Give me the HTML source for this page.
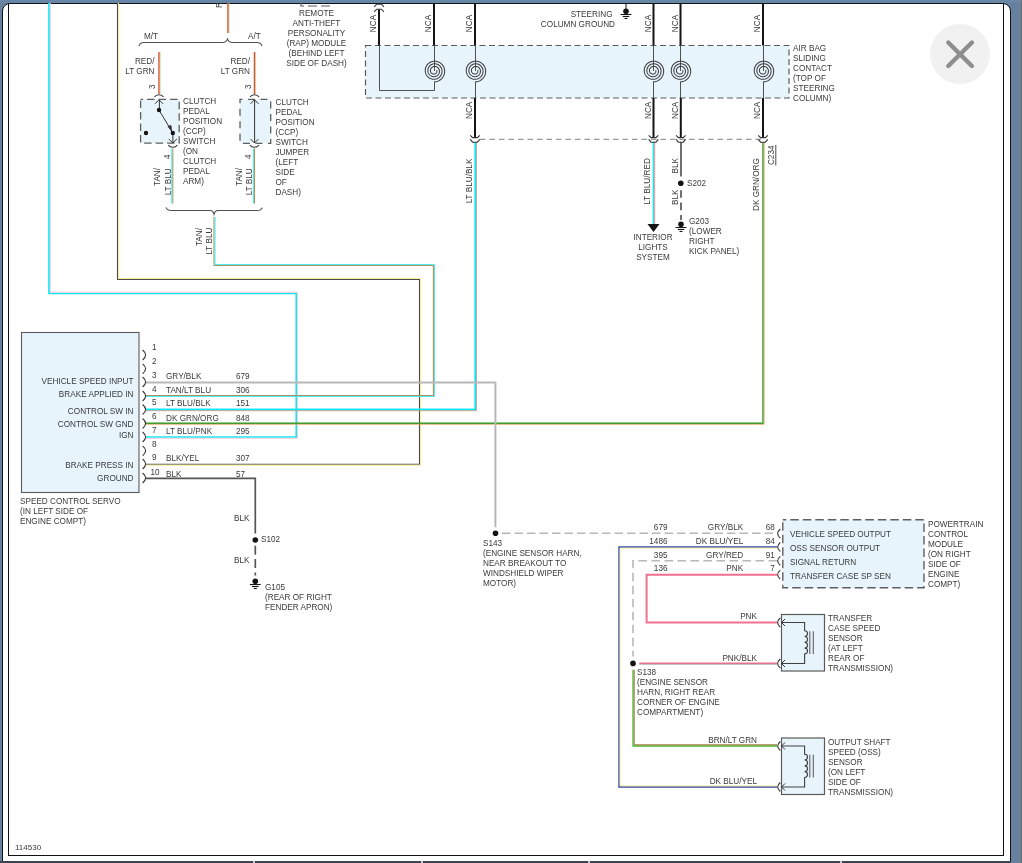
<!DOCTYPE html>
<html><head><meta charset="utf-8"><style>
html,body{margin:0;padding:0;width:1022px;height:863px;overflow:hidden;background:#66809e;font-family:"Liberation Sans",sans-serif}
#panel{position:absolute;left:2px;top:3px;width:1007px;height:870px;background:#fff;border:1px solid #0e141c;border-radius:8px}
#img{position:absolute;left:0;top:0;width:1022px;height:863px;will-change:transform}
#frame{position:absolute;left:8px;top:3px;width:994px;height:852px;border:1px solid #111;border-top:0}
#bar{position:absolute;left:0;top:861px;width:1011px;height:2px;background:#3a4452}
.gap{position:absolute;top:861px;width:2px;height:2px;background:#c8ccd2}
#close{position:absolute;left:930px;top:24px;width:60px;height:60px;border-radius:50%;background:#f1f1f1}
#rs{position:absolute;left:1021px;top:0;width:1px;height:863px;background:#6c7070}
#topbar{position:absolute;left:0;top:0;width:1022px;height:3px;background:#6a86a6}
</style></head><body>
<div id="panel"></div>
<div id="img"><svg width="1022" height="863" viewBox="0 0 1022 863" font-family="Liberation Sans, sans-serif">
<rect x="365.5" y="45.5" width="423.5" height="52.5" fill="#e8f4fc" stroke="#5a5a5a" stroke-width="1.2" stroke-dasharray="6,3.5"/>
<path d="M301.00,0.00 L301.00,6.00 L332.00,6.00" fill="none" stroke="#5a5a5a" stroke-width="1.2" stroke-dasharray="9,4" stroke-linecap="butt"/>
<path d="M146.00,437.00 L296.30,437.00 L296.30,293.50 L49.00,293.50 L49.00,0.00" fill="none" stroke="#10e8f8" stroke-width="1.7" stroke-linecap="butt"/>
<path d="M146.00,438.35 L297.65,438.35 L297.65,292.15 L50.35,292.15 L50.35,0.00" fill="none" stroke="#ffc8d8" stroke-width="1" stroke-linecap="butt"/>
<path d="M146.00,464.20 L419.50,464.20 L419.50,279.50 L117.50,279.50 L117.50,0.00" fill="none" stroke="#504850" stroke-width="1.1" stroke-linecap="butt"/>
<path d="M146.00,465.25 L420.55,465.25 L420.55,278.45 L118.55,278.45 L118.55,0.00" fill="none" stroke="#f4f090" stroke-width="1" stroke-linecap="butt"/>
<path d="M146.00,395.50 L433.40,395.50 L433.40,265.50 L214.00,265.50 L214.00,217.00" fill="none" stroke="#a89060" stroke-width="1.1" stroke-linecap="butt"/>
<path d="M146.00,396.55 L434.45,396.55 L434.45,264.45 L215.05,264.45 L215.05,217.00" fill="none" stroke="#48eef0" stroke-width="1" stroke-linecap="butt"/>
<path d="M146.00,409.40 L475.20,409.40 L475.20,142.00" fill="none" stroke="#10e8f8" stroke-width="1.7" stroke-linecap="butt"/>
<path d="M146.00,410.65 L476.45,410.65 L476.45,142.00" fill="none" stroke="#b09080" stroke-width="0.8" stroke-linecap="butt"/>
<path d="M146.00,423.20 L763.00,423.20 L763.00,142.00" fill="none" stroke="#289a28" stroke-width="1.4" stroke-linecap="butt"/>
<path d="M146.00,424.30 L764.10,424.30 L764.10,142.00" fill="none" stroke="#e0a050" stroke-width="0.8" stroke-linecap="butt"/>
<path d="M146.00,382.40 L495.40,382.40 L495.40,527.20" fill="none" stroke="#b8b8b8" stroke-width="2" stroke-linecap="butt"/>
<path d="M146.00,478.30 L255.30,478.30 L255.30,533.60" fill="none" stroke="#555555" stroke-width="1.7" stroke-linecap="butt"/>
<path d="M255.30,545.70 L255.30,575.50" fill="none" stroke="#555555" stroke-width="1.7" stroke-dasharray="9,4.4" stroke-linecap="butt"/>
<path d="M502.00,533.30 L777.00,533.30" fill="none" stroke="#b8b8b8" stroke-width="1.6" stroke-dasharray="8.5,4" stroke-linecap="butt"/>
<path d="M777.00,787.00 L619.00,787.00 L619.00,547.00 L777.00,547.00" fill="none" stroke="#3848a8" stroke-width="1.4" stroke-linecap="butt"/>
<path d="M777.00,785.85 L620.15,785.85 L620.15,548.15 L777.00,548.15" fill="none" stroke="#f0f090" stroke-width="0.9" stroke-linecap="butt"/>
<path d="M777.00,560.80 L633.00,560.80 L633.00,656.50" fill="none" stroke="#b8b8b8" stroke-width="1.6" stroke-dasharray="8.5,4.5" stroke-linecap="butt"/>
<path d="M777.00,574.70 L646.60,574.70 L646.60,622.40 L777.00,622.40" fill="none" stroke="#f0708e" stroke-width="2" stroke-linecap="butt"/>
<path d="M639.30,663.20 L777.00,663.20" fill="none" stroke="#f0708e" stroke-width="1.5" stroke-linecap="butt"/>
<path d="M639.30,664.30 L777.00,664.30" fill="none" stroke="#909090" stroke-width="0.7" stroke-linecap="butt"/>
<path d="M777.00,746.00 L633.00,746.00 L633.00,669.80" fill="none" stroke="#40c030" stroke-width="1.3" stroke-linecap="butt"/>
<path d="M777.00,744.85 L634.15,744.85 L634.15,669.80" fill="none" stroke="#a06830" stroke-width="1" stroke-linecap="butt"/>
<path d="M228.00,33.00 L228.00,0.00" fill="none" stroke="#e84a30" stroke-width="1.5" stroke-linecap="butt"/>
<path d="M229.15,33.00 L229.15,0.00" fill="none" stroke="#a0e0a0" stroke-width="0.8" stroke-linecap="butt"/>
<path d="M159.00,94.00 L159.00,52.00" fill="none" stroke="#e84a30" stroke-width="1.5" stroke-linecap="butt"/>
<path d="M160.15,94.00 L160.15,52.00" fill="none" stroke="#a0e0a0" stroke-width="0.8" stroke-linecap="butt"/>
<path d="M254.50,94.00 L254.50,52.00" fill="none" stroke="#e84a30" stroke-width="1.5" stroke-linecap="butt"/>
<path d="M255.65,94.00 L255.65,52.00" fill="none" stroke="#a0e0a0" stroke-width="0.8" stroke-linecap="butt"/>
<path d="M172.80,148.50 L172.80,203.50" fill="none" stroke="#a89060" stroke-width="1.1" stroke-linecap="butt"/>
<path d="M171.75,148.50 L171.75,203.50" fill="none" stroke="#48eef0" stroke-width="1" stroke-linecap="butt"/>
<path d="M254.50,148.50 L254.50,203.50" fill="none" stroke="#a89060" stroke-width="1.1" stroke-linecap="butt"/>
<path d="M253.45,148.50 L253.45,203.50" fill="none" stroke="#48eef0" stroke-width="1" stroke-linecap="butt"/>
<path d="M379.00,9.20 L379.00,45.50" fill="none" stroke="#141414" stroke-width="2" stroke-linecap="butt"/>
<path d="M434.00,0.00 L434.00,45.50" fill="none" stroke="#141414" stroke-width="2" stroke-linecap="butt"/>
<path d="M475.00,0.00 L475.00,45.50" fill="none" stroke="#141414" stroke-width="2" stroke-linecap="butt"/>
<path d="M653.50,0.00 L653.50,45.50" fill="none" stroke="#141414" stroke-width="2" stroke-linecap="butt"/>
<path d="M680.50,0.00 L680.50,45.50" fill="none" stroke="#141414" stroke-width="2" stroke-linecap="butt"/>
<path d="M763.00,0.00 L763.00,45.50" fill="none" stroke="#141414" stroke-width="2" stroke-linecap="butt"/>
<path d="M475.00,98.00 L475.00,137.60" fill="none" stroke="#141414" stroke-width="2" stroke-linecap="butt"/>
<path d="M653.50,98.00 L653.50,137.60" fill="none" stroke="#141414" stroke-width="2" stroke-linecap="butt"/>
<path d="M680.80,98.00 L680.80,137.60" fill="none" stroke="#141414" stroke-width="2" stroke-linecap="butt"/>
<path d="M763.00,98.00 L763.00,137.60" fill="none" stroke="#141414" stroke-width="2" stroke-linecap="butt"/>
<path d="M379.50,45.50 L379.50,90.50 L434.50,90.50 L434.50,81.50" fill="none" stroke="#505050" stroke-width="1" stroke-linecap="butt"/>
<path d="M434.50,45.50 L434.50,71.00" fill="none" stroke="#505050" stroke-width="1" stroke-linecap="butt"/>
<path d="M475.50,45.50 L475.50,71.00" fill="none" stroke="#505050" stroke-width="1" stroke-linecap="butt"/>
<path d="M653.50,45.50 L653.50,71.00" fill="none" stroke="#505050" stroke-width="1" stroke-linecap="butt"/>
<path d="M680.50,45.50 L680.50,71.00" fill="none" stroke="#505050" stroke-width="1" stroke-linecap="butt"/>
<path d="M763.50,45.50 L763.50,71.00" fill="none" stroke="#505050" stroke-width="1" stroke-linecap="butt"/>
<path d="M475.50,81.50 L475.50,98.00" fill="none" stroke="#505050" stroke-width="1" stroke-linecap="butt"/>
<path d="M653.50,81.50 L653.50,98.00" fill="none" stroke="#505050" stroke-width="1" stroke-linecap="butt"/>
<path d="M680.50,81.50 L680.50,98.00" fill="none" stroke="#505050" stroke-width="1" stroke-linecap="butt"/>
<path d="M763.50,81.50 L763.50,98.00" fill="none" stroke="#505050" stroke-width="1" stroke-linecap="butt"/>
<path d="M436.58,70.16 L436.67,70.33 L436.74,70.52 L436.79,70.71 L436.83,70.91 L436.86,71.12 L436.86,71.33 L436.85,71.54 L436.83,71.75 L436.78,71.96 L436.72,72.17 L436.64,72.38 L436.54,72.58 L436.42,72.77 L436.29,72.96 L436.14,73.14 L435.98,73.30 L435.80,73.46 L435.60,73.60 L435.39,73.72 L435.18,73.83 L434.95,73.93 L434.71,74.00 L434.46,74.06 L434.21,74.09 L433.95,74.11 L433.69,74.10 L433.43,74.08 L433.17,74.03 L432.91,73.96 L432.65,73.86 L432.40,73.75 L432.16,73.62 L431.93,73.46 L431.71,73.29 L431.50,73.09 L431.31,72.88 L431.13,72.65 L430.97,72.41 L430.83,72.15 L430.71,71.88 L430.61,71.59 L430.53,71.30 L430.48,71.00 L430.45,70.70 L430.45,70.38 L430.47,70.07 L430.51,69.76 L430.59,69.45 L430.68,69.14 L430.81,68.84 L430.95,68.55 L431.13,68.27 L431.32,68.01 L431.54,67.75 L431.78,67.52 L432.04,67.30 L432.32,67.10 L432.61,66.92 L432.93,66.77 L433.25,66.64 L433.59,66.54 L433.93,66.46 L434.29,66.42 L434.65,66.40 L435.01,66.41 L435.38,66.44 L435.74,66.51 L436.09,66.61 L436.45,66.74 L436.79,66.89 L437.12,67.08 L437.44,67.29 L437.74,67.53 L438.02,67.79 L438.28,68.08 L438.52,68.39 L438.74,68.72 L438.93,69.07 L439.09,69.43 L439.23,69.81 L439.33,70.20 L439.40,70.60 L439.44,71.01 L439.45,71.42 L439.43,71.84 L439.37,72.25 L439.27,72.66 L439.15,73.07 L438.99,73.46 L438.80,73.85 L438.57,74.22 L438.32,74.57 L438.04,74.90 L437.73,75.21 L437.39,75.50 L437.03,75.76 L436.65,75.99 L436.25,76.19 L435.83,76.36 L435.40,76.50 L434.95,76.60 L434.50,76.67 L434.03,76.70 L433.57,76.69 L433.10,76.65 L432.64,76.57 L432.18,76.45 L431.73,76.29 L431.29,76.10 L430.87,75.87 L430.46,75.61 L430.08,75.31 L429.72,74.98 L429.38,74.62 L429.07,74.24 L428.79,73.83 L428.55,73.39 L428.33,72.93 L428.16,72.46 L428.02,71.97 L427.92,71.47 L427.86,70.96 L427.85,70.45 L427.87,69.93 L427.94,69.41 L428.04,68.90 L428.19,68.40 L428.38,67.90 L428.61,67.42 L428.88,66.96 L429.19,66.52 L429.53,66.10 L429.90,65.71 L430.31,65.35 L430.75,65.02 L431.21,64.73 L431.70,64.47 L432.21,64.26 L432.74,64.08 L433.28,63.94 L433.84,63.85 L434.40,63.80 L434.97,63.80 L435.54,63.85 L436.11,63.93 L436.67,64.07 L437.22,64.25 L437.75,64.47 L438.27,64.74 L438.77,65.05 L439.24,65.40 L439.69,65.79 L440.11,66.21 L440.49,66.67 L440.83,67.16 L441.14,67.68 L441.41,68.22 L441.63,68.79 L441.81,69.37 L441.94,69.97 L442.02,70.58 L442.05,71.20 L442.04,71.82 L441.97,72.44 L441.86,73.06 L441.69,73.66 L441.48,74.26 L441.22,74.83 L440.91,75.39 L440.56,75.92 L440.16,76.43 L439.72,76.90 L439.25,77.34 L438.74,77.74 L438.19,78.10 L437.62,78.42 L437.02,78.69 L436.40,78.92 L435.76,79.09 L435.11,79.21 L434.44,79.29 L433.77,79.30 L433.10,79.27 L432.43,79.18 L431.77,79.03 L431.11,78.84 L430.48,78.59 L429.86,78.29 L429.27,77.94 L428.70,77.54 L428.17,77.09 L427.67,76.61 L427.21,76.08 L426.79,75.52 L426.41,74.92 L426.09,74.29 L425.81,73.63 L425.59,72.96 L425.42,72.26 L425.31,71.55 L425.25,70.83 L425.25,70.11 L425.31,69.39 L425.43,68.67 L425.60,67.96 L425.84,67.26 L426.12,66.58 L426.46,65.93 L426.86,65.30 L427.30,64.70 L427.80,64.14 L428.34,63.62 L428.92,63.14 L429.53,62.71 L430.19,62.32 L430.87,61.99 L431.58,61.72 L432.32,61.50 L433.07,61.34 L433.83,61.23 L434.60,61.19 L435.38,61.22 L436.16,61.30 L436.92,61.45 L437.68,61.66 L438.42,61.92 L439.14,62.25 L439.83,62.64 L440.49,63.08 L441.12,63.57 L441.70,64.12 L442.24,64.71 L442.74,65.34 L443.19,66.02 L443.58,66.72 L443.91,67.47 L444.19,68.23 L444.40,69.02 L444.55,69.83 L444.64,70.65 L444.66,71.48 L444.61,72.30 L444.50,73.13 L444.32,73.94 L444.08,74.74 L443.77,75.52 L443.40,76.28 L442.97,77.01 L442.48,77.70 L441.93,78.35 L441.34,78.96 L440.69,79.52 L440.00,80.03 L439.27,80.49 L438.51,80.88 L437.71,81.22 L436.88,81.49 L436.04,81.70 L435.17,81.83 L434.30,81.90" fill="none" stroke="#3c3c3c" stroke-width="1.05"/>
<path d="M477.58,70.16 L477.67,70.33 L477.74,70.52 L477.79,70.71 L477.83,70.91 L477.86,71.12 L477.86,71.33 L477.85,71.54 L477.83,71.75 L477.78,71.96 L477.72,72.17 L477.64,72.38 L477.54,72.58 L477.42,72.77 L477.29,72.96 L477.14,73.14 L476.98,73.30 L476.80,73.46 L476.60,73.60 L476.39,73.72 L476.18,73.83 L475.95,73.93 L475.71,74.00 L475.46,74.06 L475.21,74.09 L474.95,74.11 L474.69,74.10 L474.43,74.08 L474.17,74.03 L473.91,73.96 L473.65,73.86 L473.40,73.75 L473.16,73.62 L472.93,73.46 L472.71,73.29 L472.50,73.09 L472.31,72.88 L472.13,72.65 L471.97,72.41 L471.83,72.15 L471.71,71.88 L471.61,71.59 L471.53,71.30 L471.48,71.00 L471.45,70.70 L471.45,70.38 L471.47,70.07 L471.51,69.76 L471.59,69.45 L471.68,69.14 L471.81,68.84 L471.95,68.55 L472.13,68.27 L472.32,68.01 L472.54,67.75 L472.78,67.52 L473.04,67.30 L473.32,67.10 L473.61,66.92 L473.93,66.77 L474.25,66.64 L474.59,66.54 L474.93,66.46 L475.29,66.42 L475.65,66.40 L476.01,66.41 L476.38,66.44 L476.74,66.51 L477.09,66.61 L477.45,66.74 L477.79,66.89 L478.12,67.08 L478.44,67.29 L478.74,67.53 L479.02,67.79 L479.28,68.08 L479.52,68.39 L479.74,68.72 L479.93,69.07 L480.09,69.43 L480.23,69.81 L480.33,70.20 L480.40,70.60 L480.44,71.01 L480.45,71.42 L480.43,71.84 L480.37,72.25 L480.27,72.66 L480.15,73.07 L479.99,73.46 L479.80,73.85 L479.57,74.22 L479.32,74.57 L479.04,74.90 L478.73,75.21 L478.39,75.50 L478.03,75.76 L477.65,75.99 L477.25,76.19 L476.83,76.36 L476.40,76.50 L475.95,76.60 L475.50,76.67 L475.03,76.70 L474.57,76.69 L474.10,76.65 L473.64,76.57 L473.18,76.45 L472.73,76.29 L472.29,76.10 L471.87,75.87 L471.46,75.61 L471.08,75.31 L470.72,74.98 L470.38,74.62 L470.07,74.24 L469.79,73.83 L469.55,73.39 L469.33,72.93 L469.16,72.46 L469.02,71.97 L468.92,71.47 L468.86,70.96 L468.85,70.45 L468.87,69.93 L468.94,69.41 L469.04,68.90 L469.19,68.40 L469.38,67.90 L469.61,67.42 L469.88,66.96 L470.19,66.52 L470.53,66.10 L470.90,65.71 L471.31,65.35 L471.75,65.02 L472.21,64.73 L472.70,64.47 L473.21,64.26 L473.74,64.08 L474.28,63.94 L474.84,63.85 L475.40,63.80 L475.97,63.80 L476.54,63.85 L477.11,63.93 L477.67,64.07 L478.22,64.25 L478.75,64.47 L479.27,64.74 L479.77,65.05 L480.24,65.40 L480.69,65.79 L481.11,66.21 L481.49,66.67 L481.83,67.16 L482.14,67.68 L482.41,68.22 L482.63,68.79 L482.81,69.37 L482.94,69.97 L483.02,70.58 L483.05,71.20 L483.04,71.82 L482.97,72.44 L482.86,73.06 L482.69,73.66 L482.48,74.26 L482.22,74.83 L481.91,75.39 L481.56,75.92 L481.16,76.43 L480.72,76.90 L480.25,77.34 L479.74,77.74 L479.19,78.10 L478.62,78.42 L478.02,78.69 L477.40,78.92 L476.76,79.09 L476.11,79.21 L475.44,79.29 L474.77,79.30 L474.10,79.27 L473.43,79.18 L472.77,79.03 L472.11,78.84 L471.48,78.59 L470.86,78.29 L470.27,77.94 L469.70,77.54 L469.17,77.09 L468.67,76.61 L468.21,76.08 L467.79,75.52 L467.41,74.92 L467.09,74.29 L466.81,73.63 L466.59,72.96 L466.42,72.26 L466.31,71.55 L466.25,70.83 L466.25,70.11 L466.31,69.39 L466.43,68.67 L466.60,67.96 L466.84,67.26 L467.12,66.58 L467.46,65.93 L467.86,65.30 L468.30,64.70 L468.80,64.14 L469.34,63.62 L469.92,63.14 L470.53,62.71 L471.19,62.32 L471.87,61.99 L472.58,61.72 L473.32,61.50 L474.07,61.34 L474.83,61.23 L475.60,61.19 L476.38,61.22 L477.16,61.30 L477.92,61.45 L478.68,61.66 L479.42,61.92 L480.14,62.25 L480.83,62.64 L481.49,63.08 L482.12,63.57 L482.70,64.12 L483.24,64.71 L483.74,65.34 L484.19,66.02 L484.58,66.72 L484.91,67.47 L485.19,68.23 L485.40,69.02 L485.55,69.83 L485.64,70.65 L485.66,71.48 L485.61,72.30 L485.50,73.13 L485.32,73.94 L485.08,74.74 L484.77,75.52 L484.40,76.28 L483.97,77.01 L483.48,77.70 L482.93,78.35 L482.34,78.96 L481.69,79.52 L481.00,80.03 L480.27,80.49 L479.51,80.88 L478.71,81.22 L477.88,81.49 L477.04,81.70 L476.17,81.83 L475.30,81.90" fill="none" stroke="#3c3c3c" stroke-width="1.05"/>
<path d="M655.58,70.16 L655.67,70.33 L655.74,70.52 L655.79,70.71 L655.83,70.91 L655.86,71.12 L655.86,71.33 L655.85,71.54 L655.83,71.75 L655.78,71.96 L655.72,72.17 L655.64,72.38 L655.54,72.58 L655.42,72.77 L655.29,72.96 L655.14,73.14 L654.98,73.30 L654.80,73.46 L654.60,73.60 L654.39,73.72 L654.18,73.83 L653.95,73.93 L653.71,74.00 L653.46,74.06 L653.21,74.09 L652.95,74.11 L652.69,74.10 L652.43,74.08 L652.17,74.03 L651.91,73.96 L651.65,73.86 L651.40,73.75 L651.16,73.62 L650.93,73.46 L650.71,73.29 L650.50,73.09 L650.31,72.88 L650.13,72.65 L649.97,72.41 L649.83,72.15 L649.71,71.88 L649.61,71.59 L649.53,71.30 L649.48,71.00 L649.45,70.70 L649.45,70.38 L649.47,70.07 L649.51,69.76 L649.59,69.45 L649.68,69.14 L649.81,68.84 L649.95,68.55 L650.13,68.27 L650.32,68.01 L650.54,67.75 L650.78,67.52 L651.04,67.30 L651.32,67.10 L651.61,66.92 L651.93,66.77 L652.25,66.64 L652.59,66.54 L652.93,66.46 L653.29,66.42 L653.65,66.40 L654.01,66.41 L654.38,66.44 L654.74,66.51 L655.09,66.61 L655.45,66.74 L655.79,66.89 L656.12,67.08 L656.44,67.29 L656.74,67.53 L657.02,67.79 L657.28,68.08 L657.52,68.39 L657.74,68.72 L657.93,69.07 L658.09,69.43 L658.23,69.81 L658.33,70.20 L658.40,70.60 L658.44,71.01 L658.45,71.42 L658.43,71.84 L658.37,72.25 L658.27,72.66 L658.15,73.07 L657.99,73.46 L657.80,73.85 L657.57,74.22 L657.32,74.57 L657.04,74.90 L656.73,75.21 L656.39,75.50 L656.03,75.76 L655.65,75.99 L655.25,76.19 L654.83,76.36 L654.40,76.50 L653.95,76.60 L653.50,76.67 L653.03,76.70 L652.57,76.69 L652.10,76.65 L651.64,76.57 L651.18,76.45 L650.73,76.29 L650.29,76.10 L649.87,75.87 L649.46,75.61 L649.08,75.31 L648.72,74.98 L648.38,74.62 L648.07,74.24 L647.79,73.83 L647.55,73.39 L647.33,72.93 L647.16,72.46 L647.02,71.97 L646.92,71.47 L646.86,70.96 L646.85,70.45 L646.87,69.93 L646.94,69.41 L647.04,68.90 L647.19,68.40 L647.38,67.90 L647.61,67.42 L647.88,66.96 L648.19,66.52 L648.53,66.10 L648.90,65.71 L649.31,65.35 L649.75,65.02 L650.21,64.73 L650.70,64.47 L651.21,64.26 L651.74,64.08 L652.28,63.94 L652.84,63.85 L653.40,63.80 L653.97,63.80 L654.54,63.85 L655.11,63.93 L655.67,64.07 L656.22,64.25 L656.75,64.47 L657.27,64.74 L657.77,65.05 L658.24,65.40 L658.69,65.79 L659.11,66.21 L659.49,66.67 L659.83,67.16 L660.14,67.68 L660.41,68.22 L660.63,68.79 L660.81,69.37 L660.94,69.97 L661.02,70.58 L661.05,71.20 L661.04,71.82 L660.97,72.44 L660.86,73.06 L660.69,73.66 L660.48,74.26 L660.22,74.83 L659.91,75.39 L659.56,75.92 L659.16,76.43 L658.72,76.90 L658.25,77.34 L657.74,77.74 L657.19,78.10 L656.62,78.42 L656.02,78.69 L655.40,78.92 L654.76,79.09 L654.11,79.21 L653.44,79.29 L652.77,79.30 L652.10,79.27 L651.43,79.18 L650.77,79.03 L650.11,78.84 L649.48,78.59 L648.86,78.29 L648.27,77.94 L647.70,77.54 L647.17,77.09 L646.67,76.61 L646.21,76.08 L645.79,75.52 L645.41,74.92 L645.09,74.29 L644.81,73.63 L644.59,72.96 L644.42,72.26 L644.31,71.55 L644.25,70.83 L644.25,70.11 L644.31,69.39 L644.43,68.67 L644.60,67.96 L644.84,67.26 L645.12,66.58 L645.46,65.93 L645.86,65.30 L646.30,64.70 L646.80,64.14 L647.34,63.62 L647.92,63.14 L648.53,62.71 L649.19,62.32 L649.87,61.99 L650.58,61.72 L651.32,61.50 L652.07,61.34 L652.83,61.23 L653.60,61.19 L654.38,61.22 L655.16,61.30 L655.92,61.45 L656.68,61.66 L657.42,61.92 L658.14,62.25 L658.83,62.64 L659.49,63.08 L660.12,63.57 L660.70,64.12 L661.24,64.71 L661.74,65.34 L662.19,66.02 L662.58,66.72 L662.91,67.47 L663.19,68.23 L663.40,69.02 L663.55,69.83 L663.64,70.65 L663.66,71.48 L663.61,72.30 L663.50,73.13 L663.32,73.94 L663.08,74.74 L662.77,75.52 L662.40,76.28 L661.97,77.01 L661.48,77.70 L660.93,78.35 L660.34,78.96 L659.69,79.52 L659.00,80.03 L658.27,80.49 L657.51,80.88 L656.71,81.22 L655.88,81.49 L655.04,81.70 L654.17,81.83 L653.30,81.90" fill="none" stroke="#3c3c3c" stroke-width="1.05"/>
<path d="M682.58,70.16 L682.67,70.33 L682.74,70.52 L682.79,70.71 L682.83,70.91 L682.86,71.12 L682.86,71.33 L682.85,71.54 L682.83,71.75 L682.78,71.96 L682.72,72.17 L682.64,72.38 L682.54,72.58 L682.42,72.77 L682.29,72.96 L682.14,73.14 L681.98,73.30 L681.80,73.46 L681.60,73.60 L681.39,73.72 L681.18,73.83 L680.95,73.93 L680.71,74.00 L680.46,74.06 L680.21,74.09 L679.95,74.11 L679.69,74.10 L679.43,74.08 L679.17,74.03 L678.91,73.96 L678.65,73.86 L678.40,73.75 L678.16,73.62 L677.93,73.46 L677.71,73.29 L677.50,73.09 L677.31,72.88 L677.13,72.65 L676.97,72.41 L676.83,72.15 L676.71,71.88 L676.61,71.59 L676.53,71.30 L676.48,71.00 L676.45,70.70 L676.45,70.38 L676.47,70.07 L676.51,69.76 L676.59,69.45 L676.68,69.14 L676.81,68.84 L676.95,68.55 L677.13,68.27 L677.32,68.01 L677.54,67.75 L677.78,67.52 L678.04,67.30 L678.32,67.10 L678.61,66.92 L678.93,66.77 L679.25,66.64 L679.59,66.54 L679.93,66.46 L680.29,66.42 L680.65,66.40 L681.01,66.41 L681.38,66.44 L681.74,66.51 L682.09,66.61 L682.45,66.74 L682.79,66.89 L683.12,67.08 L683.44,67.29 L683.74,67.53 L684.02,67.79 L684.28,68.08 L684.52,68.39 L684.74,68.72 L684.93,69.07 L685.09,69.43 L685.23,69.81 L685.33,70.20 L685.40,70.60 L685.44,71.01 L685.45,71.42 L685.43,71.84 L685.37,72.25 L685.27,72.66 L685.15,73.07 L684.99,73.46 L684.80,73.85 L684.57,74.22 L684.32,74.57 L684.04,74.90 L683.73,75.21 L683.39,75.50 L683.03,75.76 L682.65,75.99 L682.25,76.19 L681.83,76.36 L681.40,76.50 L680.95,76.60 L680.50,76.67 L680.03,76.70 L679.57,76.69 L679.10,76.65 L678.64,76.57 L678.18,76.45 L677.73,76.29 L677.29,76.10 L676.87,75.87 L676.46,75.61 L676.08,75.31 L675.72,74.98 L675.38,74.62 L675.07,74.24 L674.79,73.83 L674.55,73.39 L674.33,72.93 L674.16,72.46 L674.02,71.97 L673.92,71.47 L673.86,70.96 L673.85,70.45 L673.87,69.93 L673.94,69.41 L674.04,68.90 L674.19,68.40 L674.38,67.90 L674.61,67.42 L674.88,66.96 L675.19,66.52 L675.53,66.10 L675.90,65.71 L676.31,65.35 L676.75,65.02 L677.21,64.73 L677.70,64.47 L678.21,64.26 L678.74,64.08 L679.28,63.94 L679.84,63.85 L680.40,63.80 L680.97,63.80 L681.54,63.85 L682.11,63.93 L682.67,64.07 L683.22,64.25 L683.75,64.47 L684.27,64.74 L684.77,65.05 L685.24,65.40 L685.69,65.79 L686.11,66.21 L686.49,66.67 L686.83,67.16 L687.14,67.68 L687.41,68.22 L687.63,68.79 L687.81,69.37 L687.94,69.97 L688.02,70.58 L688.05,71.20 L688.04,71.82 L687.97,72.44 L687.86,73.06 L687.69,73.66 L687.48,74.26 L687.22,74.83 L686.91,75.39 L686.56,75.92 L686.16,76.43 L685.72,76.90 L685.25,77.34 L684.74,77.74 L684.19,78.10 L683.62,78.42 L683.02,78.69 L682.40,78.92 L681.76,79.09 L681.11,79.21 L680.44,79.29 L679.77,79.30 L679.10,79.27 L678.43,79.18 L677.77,79.03 L677.11,78.84 L676.48,78.59 L675.86,78.29 L675.27,77.94 L674.70,77.54 L674.17,77.09 L673.67,76.61 L673.21,76.08 L672.79,75.52 L672.41,74.92 L672.09,74.29 L671.81,73.63 L671.59,72.96 L671.42,72.26 L671.31,71.55 L671.25,70.83 L671.25,70.11 L671.31,69.39 L671.43,68.67 L671.60,67.96 L671.84,67.26 L672.12,66.58 L672.46,65.93 L672.86,65.30 L673.30,64.70 L673.80,64.14 L674.34,63.62 L674.92,63.14 L675.53,62.71 L676.19,62.32 L676.87,61.99 L677.58,61.72 L678.32,61.50 L679.07,61.34 L679.83,61.23 L680.60,61.19 L681.38,61.22 L682.16,61.30 L682.92,61.45 L683.68,61.66 L684.42,61.92 L685.14,62.25 L685.83,62.64 L686.49,63.08 L687.12,63.57 L687.70,64.12 L688.24,64.71 L688.74,65.34 L689.19,66.02 L689.58,66.72 L689.91,67.47 L690.19,68.23 L690.40,69.02 L690.55,69.83 L690.64,70.65 L690.66,71.48 L690.61,72.30 L690.50,73.13 L690.32,73.94 L690.08,74.74 L689.77,75.52 L689.40,76.28 L688.97,77.01 L688.48,77.70 L687.93,78.35 L687.34,78.96 L686.69,79.52 L686.00,80.03 L685.27,80.49 L684.51,80.88 L683.71,81.22 L682.88,81.49 L682.04,81.70 L681.17,81.83 L680.30,81.90" fill="none" stroke="#3c3c3c" stroke-width="1.05"/>
<path d="M765.58,70.16 L765.67,70.33 L765.74,70.52 L765.79,70.71 L765.83,70.91 L765.86,71.12 L765.86,71.33 L765.85,71.54 L765.83,71.75 L765.78,71.96 L765.72,72.17 L765.64,72.38 L765.54,72.58 L765.42,72.77 L765.29,72.96 L765.14,73.14 L764.98,73.30 L764.80,73.46 L764.60,73.60 L764.39,73.72 L764.18,73.83 L763.95,73.93 L763.71,74.00 L763.46,74.06 L763.21,74.09 L762.95,74.11 L762.69,74.10 L762.43,74.08 L762.17,74.03 L761.91,73.96 L761.65,73.86 L761.40,73.75 L761.16,73.62 L760.93,73.46 L760.71,73.29 L760.50,73.09 L760.31,72.88 L760.13,72.65 L759.97,72.41 L759.83,72.15 L759.71,71.88 L759.61,71.59 L759.53,71.30 L759.48,71.00 L759.45,70.70 L759.45,70.38 L759.47,70.07 L759.51,69.76 L759.59,69.45 L759.68,69.14 L759.81,68.84 L759.95,68.55 L760.13,68.27 L760.32,68.01 L760.54,67.75 L760.78,67.52 L761.04,67.30 L761.32,67.10 L761.61,66.92 L761.93,66.77 L762.25,66.64 L762.59,66.54 L762.93,66.46 L763.29,66.42 L763.65,66.40 L764.01,66.41 L764.38,66.44 L764.74,66.51 L765.09,66.61 L765.45,66.74 L765.79,66.89 L766.12,67.08 L766.44,67.29 L766.74,67.53 L767.02,67.79 L767.28,68.08 L767.52,68.39 L767.74,68.72 L767.93,69.07 L768.09,69.43 L768.23,69.81 L768.33,70.20 L768.40,70.60 L768.44,71.01 L768.45,71.42 L768.43,71.84 L768.37,72.25 L768.27,72.66 L768.15,73.07 L767.99,73.46 L767.80,73.85 L767.57,74.22 L767.32,74.57 L767.04,74.90 L766.73,75.21 L766.39,75.50 L766.03,75.76 L765.65,75.99 L765.25,76.19 L764.83,76.36 L764.40,76.50 L763.95,76.60 L763.50,76.67 L763.03,76.70 L762.57,76.69 L762.10,76.65 L761.64,76.57 L761.18,76.45 L760.73,76.29 L760.29,76.10 L759.87,75.87 L759.46,75.61 L759.08,75.31 L758.72,74.98 L758.38,74.62 L758.07,74.24 L757.79,73.83 L757.55,73.39 L757.33,72.93 L757.16,72.46 L757.02,71.97 L756.92,71.47 L756.86,70.96 L756.85,70.45 L756.87,69.93 L756.94,69.41 L757.04,68.90 L757.19,68.40 L757.38,67.90 L757.61,67.42 L757.88,66.96 L758.19,66.52 L758.53,66.10 L758.90,65.71 L759.31,65.35 L759.75,65.02 L760.21,64.73 L760.70,64.47 L761.21,64.26 L761.74,64.08 L762.28,63.94 L762.84,63.85 L763.40,63.80 L763.97,63.80 L764.54,63.85 L765.11,63.93 L765.67,64.07 L766.22,64.25 L766.75,64.47 L767.27,64.74 L767.77,65.05 L768.24,65.40 L768.69,65.79 L769.11,66.21 L769.49,66.67 L769.83,67.16 L770.14,67.68 L770.41,68.22 L770.63,68.79 L770.81,69.37 L770.94,69.97 L771.02,70.58 L771.05,71.20 L771.04,71.82 L770.97,72.44 L770.86,73.06 L770.69,73.66 L770.48,74.26 L770.22,74.83 L769.91,75.39 L769.56,75.92 L769.16,76.43 L768.72,76.90 L768.25,77.34 L767.74,77.74 L767.19,78.10 L766.62,78.42 L766.02,78.69 L765.40,78.92 L764.76,79.09 L764.11,79.21 L763.44,79.29 L762.77,79.30 L762.10,79.27 L761.43,79.18 L760.77,79.03 L760.11,78.84 L759.48,78.59 L758.86,78.29 L758.27,77.94 L757.70,77.54 L757.17,77.09 L756.67,76.61 L756.21,76.08 L755.79,75.52 L755.41,74.92 L755.09,74.29 L754.81,73.63 L754.59,72.96 L754.42,72.26 L754.31,71.55 L754.25,70.83 L754.25,70.11 L754.31,69.39 L754.43,68.67 L754.60,67.96 L754.84,67.26 L755.12,66.58 L755.46,65.93 L755.86,65.30 L756.30,64.70 L756.80,64.14 L757.34,63.62 L757.92,63.14 L758.53,62.71 L759.19,62.32 L759.87,61.99 L760.58,61.72 L761.32,61.50 L762.07,61.34 L762.83,61.23 L763.60,61.19 L764.38,61.22 L765.16,61.30 L765.92,61.45 L766.68,61.66 L767.42,61.92 L768.14,62.25 L768.83,62.64 L769.49,63.08 L770.12,63.57 L770.70,64.12 L771.24,64.71 L771.74,65.34 L772.19,66.02 L772.58,66.72 L772.91,67.47 L773.19,68.23 L773.40,69.02 L773.55,69.83 L773.64,70.65 L773.66,71.48 L773.61,72.30 L773.50,73.13 L773.32,73.94 L773.08,74.74 L772.77,75.52 L772.40,76.28 L771.97,77.01 L771.48,77.70 L770.93,78.35 L770.34,78.96 L769.69,79.52 L769.00,80.03 L768.27,80.49 L767.51,80.88 L766.71,81.22 L765.88,81.49 L765.04,81.70 L764.17,81.83 L763.30,81.90" fill="none" stroke="#3c3c3c" stroke-width="1.05"/>
<path d="M480.00,139.40 L765.00,139.40" fill="none" stroke="#9a9a9a" stroke-width="1.1" stroke-dasharray="5.5,4" stroke-linecap="butt"/>
<path d="M653.50,225.00 L653.50,142.00" fill="none" stroke="#10e8f8" stroke-width="1.6" stroke-linecap="butt"/>
<path d="M654.70,225.00 L654.70,142.00" fill="none" stroke="#f08070" stroke-width="0.8" stroke-linecap="butt"/>
<path d="M647.5,224 L659.5,224 L653.5,232 Z" fill="#141414"/>
<path d="M681.00,142.00 L681.00,176.60" fill="none" stroke="#555555" stroke-width="1.7" stroke-linecap="butt"/>
<path d="M681.00,190.20 L681.00,220.00" fill="none" stroke="#555555" stroke-width="1.7" stroke-dasharray="7.6,4.8" stroke-linecap="butt"/>
<circle cx="680.8" cy="183.3" r="2.8" fill="#141414"/>
<circle cx="681" cy="224.3" r="2.8" fill="#141414"/>
<path d="M675.60,227.50 L686.40,227.50" fill="none" stroke="#141414" stroke-width="1.1" stroke-linecap="butt"/>
<path d="M677.70,229.50 L684.30,229.50" fill="none" stroke="#141414" stroke-width="1.1" stroke-linecap="butt"/>
<path d="M679.50,231.50 L682.50,231.50" fill="none" stroke="#141414" stroke-width="1.1" stroke-linecap="butt"/>
<rect x="140.6" y="99.3" width="38.6" height="43.8" fill="#e8f4fc" stroke="#5e5e5e" stroke-width="1.3" stroke-dasharray="7.5,4" stroke-dashoffset="5"/>
<rect x="240" y="99.3" width="30.7" height="44" fill="#e8f4fc" stroke="#5e5e5e" stroke-width="1.3" stroke-dasharray="7,5.5" stroke-dashoffset="4.5"/>
<path d="M159.40,100.00 L159.40,110.00" fill="none" stroke="#333" stroke-width="1" stroke-linecap="butt"/>
<path d="M155,103.8 L159,99.8 L163,103.8" fill="none" stroke="#333" stroke-width="1"/>
<path d="M159.00,110.00 L172.80,133.00" fill="none" stroke="#333" stroke-width="1" stroke-linecap="butt"/>
<path d="M168,126.6 L171.6,131 L171,125.4 Z" fill="#333" stroke="#333" stroke-width="0.8"/>
<path d="M172.90,133.00 L172.90,143.00" fill="none" stroke="#333" stroke-width="1" stroke-linecap="butt"/>
<path d="M168.8,139 L172.8,143 L176.8,139" fill="none" stroke="#333" stroke-width="1"/>
<circle cx="159" cy="110" r="2.2" fill="#141414"/>
<circle cx="172.8" cy="133" r="2.2" fill="#141414"/>
<circle cx="146" cy="133" r="2.2" fill="#141414"/>
<path d="M254.60,100.00 L254.60,143.00" fill="none" stroke="#333" stroke-width="1" stroke-linecap="butt"/>
<path d="M250.5,103.8 L254.5,99.8 L258.5,103.8" fill="none" stroke="#333" stroke-width="1"/>
<path d="M250.5,139 L254.5,143 L258.5,139" fill="none" stroke="#333" stroke-width="1"/>
<path d="M154.5,97 A5,4 0 0 1 163.5,97" fill="none" stroke="#333" stroke-width="1.1"/>
<path d="M250.0,97 A5,4 0 0 1 259.0,97" fill="none" stroke="#333" stroke-width="1.1"/>
<path d="M168.3,145 A5,4 0 0 0 177.3,145" fill="none" stroke="#333" stroke-width="1.1"/>
<path d="M250.0,145 A5,4 0 0 0 259.0,145" fill="none" stroke="#333" stroke-width="1.1"/>
<path d="M139,46 Q140,42.5 144,42.5 L223,42.5 Q226,42.5 227.5,39 Q229,42.5 232,42.5 L257,42.5 Q261,42.5 262,46" fill="none" stroke="#505050" stroke-width="1.1"/>
<path d="M166,207.4 Q167,210.5 171,210.5 L210,210.5 Q213,210.5 214,214.3 Q215,210.5 218,210.5 L257,210.5 Q261,210.5 262.2,207.6" fill="none" stroke="#505050" stroke-width="1.1"/>
<path d="M470.2,135.3 L472.6,137.6 L477.4,137.6 L479.8,135.3" fill="none" stroke="#333" stroke-width="1.1"/>
<path d="M470.2,139.4 L472.6,142.2 L477.4,142.2 L479.8,139.4" fill="none" stroke="#333" stroke-width="1.1"/>
<path d="M648.7,135.3 L651.1,137.6 L655.9,137.6 L658.3,135.3" fill="none" stroke="#333" stroke-width="1.1"/>
<path d="M648.7,139.4 L651.1,142.2 L655.9,142.2 L658.3,139.4" fill="none" stroke="#333" stroke-width="1.1"/>
<path d="M676.0,135.3 L678.4,137.6 L683.1999999999999,137.6 L685.5999999999999,135.3" fill="none" stroke="#333" stroke-width="1.1"/>
<path d="M676.0,139.4 L678.4,142.2 L683.1999999999999,142.2 L685.5999999999999,139.4" fill="none" stroke="#333" stroke-width="1.1"/>
<path d="M758.2,135.3 L760.6,137.6 L765.4,137.6 L767.8,135.3" fill="none" stroke="#333" stroke-width="1.1"/>
<path d="M758.2,139.4 L760.6,142.2 L765.4,142.2 L767.8,139.4" fill="none" stroke="#333" stroke-width="1.1"/>
<path d="M374.2,11.8 L376.7,9.2 L381.5,9.2 L383.9,11.8" fill="none" stroke="#333" stroke-width="1.1"/>
<path d="M374.2,6.8 L376.6,4.2 L381.5,4.2 L383.9,6.8" fill="none" stroke="#333" stroke-width="1.1"/>
<path d="M626.00,0.00 L626.00,9.00" fill="none" stroke="#141414" stroke-width="1" stroke-linecap="butt"/>
<circle cx="626" cy="11.3" r="2.8" fill="#141414"/>
<path d="M620.60,14.50 L631.40,14.50" fill="none" stroke="#141414" stroke-width="1.1" stroke-linecap="butt"/>
<path d="M622.70,16.50 L629.30,16.50" fill="none" stroke="#141414" stroke-width="1.1" stroke-linecap="butt"/>
<path d="M624.50,18.50 L627.50,18.50" fill="none" stroke="#141414" stroke-width="1.1" stroke-linecap="butt"/>
<text x="144" y="39" fill="#3a3a3a" font-size="8.2">M/T</text>
<text x="248" y="39" fill="#3a3a3a" font-size="8.2">A/T</text>
<text x="154.5" y="63.8" text-anchor="end" fill="#3a3a3a" font-size="8.2">RED/</text>
<text x="154.5" y="73.8" text-anchor="end" fill="#3a3a3a" font-size="8.2">LT GRN</text>
<text x="250" y="63.8" text-anchor="end" fill="#3a3a3a" font-size="8.2">RED/</text>
<text x="250" y="73.8" text-anchor="end" fill="#3a3a3a" font-size="8.2">LT GRN</text>
<text x="183" y="103.8" fill="#3a3a3a" font-size="8.2">CLUTCH</text>
<text x="183" y="113.8" fill="#3a3a3a" font-size="8.2">PEDAL</text>
<text x="183" y="123.8" fill="#3a3a3a" font-size="8.2">POSITION</text>
<text x="183" y="133.8" fill="#3a3a3a" font-size="8.2">(CCP)</text>
<text x="183" y="143.8" fill="#3a3a3a" font-size="8.2">SWITCH</text>
<text x="183" y="153.8" fill="#3a3a3a" font-size="8.2">(ON</text>
<text x="183" y="163.8" fill="#3a3a3a" font-size="8.2">CLUTCH</text>
<text x="183" y="173.8" fill="#3a3a3a" font-size="8.2">PEDAL</text>
<text x="183" y="183.8" fill="#3a3a3a" font-size="8.2">ARM)</text>
<text x="275.5" y="104.5" fill="#3a3a3a" font-size="8.2">CLUTCH</text>
<text x="275.5" y="114.5" fill="#3a3a3a" font-size="8.2">PEDAL</text>
<text x="275.5" y="124.5" fill="#3a3a3a" font-size="8.2">POSITION</text>
<text x="275.5" y="134.5" fill="#3a3a3a" font-size="8.2">(CCP)</text>
<text x="275.5" y="144.5" fill="#3a3a3a" font-size="8.2">SWITCH</text>
<text x="275.5" y="154.5" fill="#3a3a3a" font-size="8.2">JUMPER</text>
<text x="275.5" y="164.5" fill="#3a3a3a" font-size="8.2">(LEFT</text>
<text x="275.5" y="174.5" fill="#3a3a3a" font-size="8.2">SIDE</text>
<text x="275.5" y="184.5" fill="#3a3a3a" font-size="8.2">OF</text>
<text x="275.5" y="194.5" fill="#3a3a3a" font-size="8.2">DASH)</text>
<text x="316.5" y="16.0" text-anchor="middle" fill="#3a3a3a" font-size="8.2">REMOTE</text>
<text x="316.5" y="25.9" text-anchor="middle" fill="#3a3a3a" font-size="8.2">ANTI-THEFT</text>
<text x="316.5" y="35.8" text-anchor="middle" fill="#3a3a3a" font-size="8.2">PERSONALITY</text>
<text x="316.5" y="45.7" text-anchor="middle" fill="#3a3a3a" font-size="8.2">(RAP) MODULE</text>
<text x="316.5" y="55.6" text-anchor="middle" fill="#3a3a3a" font-size="8.2">(BEHIND LEFT</text>
<text x="316.5" y="65.5" text-anchor="middle" fill="#3a3a3a" font-size="8.2">SIDE OF DASH)</text>
<text x="612.5" y="17" text-anchor="end" fill="#3a3a3a" font-size="8.2">STEERING</text>
<text x="615" y="27" text-anchor="end" fill="#3a3a3a" font-size="8.2">COLUMN GROUND</text>
<text x="793" y="51" fill="#3a3a3a" font-size="8.2">AIR BAG</text>
<text x="793" y="61" fill="#3a3a3a" font-size="8.2">SLIDING</text>
<text x="793" y="71" fill="#3a3a3a" font-size="8.2">CONTACT</text>
<text x="793" y="81" fill="#3a3a3a" font-size="8.2">(TOP OF</text>
<text x="793" y="91" fill="#3a3a3a" font-size="8.2">STEERING</text>
<text x="793" y="101" fill="#3a3a3a" font-size="8.2">COLUMN)</text>
<text x="653" y="239.5" text-anchor="middle" fill="#3a3a3a" font-size="8.2">INTERIOR</text>
<text x="653" y="249.5" text-anchor="middle" fill="#3a3a3a" font-size="8.2">LIGHTS</text>
<text x="653" y="259.5" text-anchor="middle" fill="#3a3a3a" font-size="8.2">SYSTEM</text>
<text x="687" y="186" fill="#3a3a3a" font-size="8.2">S202</text>
<text x="689" y="224" fill="#3a3a3a" font-size="8.2">G203</text>
<text x="689" y="234" fill="#3a3a3a" font-size="8.2">(LOWER</text>
<text x="689" y="244" fill="#3a3a3a" font-size="8.2">RIGHT</text>
<text x="689" y="254" fill="#3a3a3a" font-size="8.2">KICK PANEL)</text>
<text transform="translate(376,32.2) rotate(-90)" fill="#3a3a3a" font-size="8.2">NCA</text>
<text transform="translate(431,32.2) rotate(-90)" fill="#3a3a3a" font-size="8.2">NCA</text>
<text transform="translate(472,32.2) rotate(-90)" fill="#3a3a3a" font-size="8.2">NCA</text>
<text transform="translate(650.5,32.2) rotate(-90)" fill="#3a3a3a" font-size="8.2">NCA</text>
<text transform="translate(677.5,32.2) rotate(-90)" fill="#3a3a3a" font-size="8.2">NCA</text>
<text transform="translate(760,32.2) rotate(-90)" fill="#3a3a3a" font-size="8.2">NCA</text>
<text transform="translate(472,119) rotate(-90)" fill="#3a3a3a" font-size="8.2">NCA</text>
<text transform="translate(650.5,119) rotate(-90)" fill="#3a3a3a" font-size="8.2">NCA</text>
<text transform="translate(677.5,119) rotate(-90)" fill="#3a3a3a" font-size="8.2">NCA</text>
<text transform="translate(760,119) rotate(-90)" fill="#3a3a3a" font-size="8.2">NCA</text>
<text transform="translate(471.6,158.6) rotate(-90)" text-anchor="end" fill="#3a3a3a" font-size="8.2">LT BLU/BLK</text>
<text transform="translate(649.7,158.2) rotate(-90)" text-anchor="end" fill="#3a3a3a" font-size="8.2">LT BLU/RED</text>
<text transform="translate(678.2,158) rotate(-90)" text-anchor="end" fill="#3a3a3a" font-size="8.2">BLK</text>
<text transform="translate(678.2,189.5) rotate(-90)" text-anchor="end" fill="#3a3a3a" font-size="8.2">BLK</text>
<text transform="translate(759,158.2) rotate(-90)" text-anchor="end" fill="#3a3a3a" font-size="8.2">DK GRN/ORG</text>
<text transform="translate(773.8,145.5) rotate(-90)" text-anchor="end" fill="#3a3a3a" font-size="8.2">C234</text>
<path d="M775.80,145.00 L775.80,165.50" fill="none" stroke="#3a3a3a" stroke-width="0.9" stroke-linecap="butt"/>
<text transform="translate(155,84.5) rotate(-90)" text-anchor="end" fill="#3a3a3a" font-size="8.2">3</text>
<text transform="translate(250.5,84.5) rotate(-90)" text-anchor="end" fill="#3a3a3a" font-size="8.2">3</text>
<text transform="translate(169.5,154.5) rotate(-90)" text-anchor="end" fill="#3a3a3a" font-size="8.2">4</text>
<text transform="translate(251,154.5) rotate(-90)" text-anchor="end" fill="#3a3a3a" font-size="8.2">4</text>
<text transform="translate(160.4,186) rotate(-90)" fill="#3a3a3a" font-size="8.2">TAN/</text>
<text transform="translate(170.5,195.3) rotate(-90)" fill="#3a3a3a" font-size="8.2">LT BLU</text>
<text transform="translate(242,186) rotate(-90)" fill="#3a3a3a" font-size="8.2">TAN/</text>
<text transform="translate(252,195.3) rotate(-90)" fill="#3a3a3a" font-size="8.2">LT BLU</text>
<text transform="translate(202.3,228) rotate(-90)" text-anchor="end" fill="#3a3a3a" font-size="8.2">TAN/</text>
<text transform="translate(212.3,227.6) rotate(-90)" text-anchor="end" fill="#3a3a3a" font-size="8.2">LT BLU</text>
<text transform="translate(222,8) rotate(-90)" fill="#3a3a3a" font-size="8.2">RED/LT GRN</text>
<rect x="21.5" y="332.5" width="117.5" height="160" fill="#e8f4fc" stroke="#5a5a5a" stroke-width="1.1"/>
<text x="152" y="349.7" fill="#3a3a3a" font-size="8.2">1</text>
<text x="152" y="363.5" fill="#3a3a3a" font-size="8.2">2</text>
<text x="152" y="377.5" fill="#3a3a3a" font-size="8.2">3</text>
<text x="152" y="391.5" fill="#3a3a3a" font-size="8.2">4</text>
<text x="152" y="405" fill="#3a3a3a" font-size="8.2">5</text>
<text x="152" y="418.5" fill="#3a3a3a" font-size="8.2">6</text>
<text x="152" y="433" fill="#3a3a3a" font-size="8.2">7</text>
<text x="152" y="446.5" fill="#3a3a3a" font-size="8.2">8</text>
<text x="152" y="459.5" fill="#3a3a3a" font-size="8.2">9</text>
<text x="150.5" y="475" fill="#3a3a3a" font-size="8.2">10</text>
<path d="M142.6,350 Q148.6,355 142.6,360" fill="none" stroke="#333" stroke-width="1.1"/>
<path d="M142.6,363.8 Q148.6,368.8 142.6,373.8" fill="none" stroke="#333" stroke-width="1.1"/>
<path d="M142.6,377 Q148.6,382 142.6,387" fill="none" stroke="#333" stroke-width="1.1"/>
<path d="M142.6,391 Q148.6,396 142.6,401" fill="none" stroke="#333" stroke-width="1.1"/>
<path d="M142.6,404.5 Q148.6,409.5 142.6,414.5" fill="none" stroke="#333" stroke-width="1.1"/>
<path d="M142.6,418.5 Q148.6,423.5 142.6,428.5" fill="none" stroke="#333" stroke-width="1.1"/>
<path d="M142.6,432 Q148.6,437 142.6,442" fill="none" stroke="#333" stroke-width="1.1"/>
<path d="M142.6,445.8 Q148.6,450.8 142.6,455.8" fill="none" stroke="#333" stroke-width="1.1"/>
<path d="M142.6,459 Q148.6,464 142.6,469" fill="none" stroke="#333" stroke-width="1.1"/>
<path d="M142.6,473 Q148.6,478 142.6,483" fill="none" stroke="#333" stroke-width="1.1"/>
<text x="133.5" y="384" text-anchor="end" fill="#3a3a3a" font-size="8.2">VEHICLE SPEED INPUT</text>
<text x="133.5" y="397" text-anchor="end" fill="#3a3a3a" font-size="8.2">BRAKE APPLIED IN</text>
<text x="133.5" y="414" text-anchor="end" fill="#3a3a3a" font-size="8.2">CONTROL SW IN</text>
<text x="133.5" y="427" text-anchor="end" fill="#3a3a3a" font-size="8.2">CONTROL SW GND</text>
<text x="133.5" y="438" text-anchor="end" fill="#3a3a3a" font-size="8.2">IGN</text>
<text x="133.5" y="468" text-anchor="end" fill="#3a3a3a" font-size="8.2">BRAKE PRESS IN</text>
<text x="133.5" y="481" text-anchor="end" fill="#3a3a3a" font-size="8.2">GROUND</text>
<text x="166" y="378.6" fill="#3a3a3a" font-size="8.2">GRY/BLK</text>
<text x="236" y="378.6" fill="#3a3a3a" font-size="8.2">679</text>
<text x="166" y="392.5" fill="#3a3a3a" font-size="8.2">TAN/LT BLU</text>
<text x="236" y="392.5" fill="#3a3a3a" font-size="8.2">306</text>
<text x="166" y="406" fill="#3a3a3a" font-size="8.2">LT BLU/BLK</text>
<text x="236" y="406" fill="#3a3a3a" font-size="8.2">151</text>
<text x="166" y="420.5" fill="#3a3a3a" font-size="8.2">DK GRN/ORG</text>
<text x="236" y="420.5" fill="#3a3a3a" font-size="8.2">848</text>
<text x="166" y="434" fill="#3a3a3a" font-size="8.2">LT BLU/PNK</text>
<text x="236" y="434" fill="#3a3a3a" font-size="8.2">295</text>
<text x="166" y="461" fill="#3a3a3a" font-size="8.2">BLK/YEL</text>
<text x="236" y="461" fill="#3a3a3a" font-size="8.2">307</text>
<text x="166" y="477" fill="#3a3a3a" font-size="8.2">BLK</text>
<text x="236" y="477" fill="#3a3a3a" font-size="8.2">57</text>
<text x="20" y="503.5" fill="#3a3a3a" font-size="8.2">SPEED CONTROL SERVO</text>
<text x="20" y="513.9" fill="#3a3a3a" font-size="8.2">(IN LEFT SIDE OF</text>
<text x="20" y="524.3" fill="#3a3a3a" font-size="8.2">ENGINE COMPT)</text>
<text x="249.5" y="521" text-anchor="end" fill="#3a3a3a" font-size="8.2">BLK</text>
<text x="261" y="542" fill="#3a3a3a" font-size="8.2">S102</text>
<text x="249.5" y="563" text-anchor="end" fill="#3a3a3a" font-size="8.2">BLK</text>
<circle cx="255.3" cy="540" r="2.8" fill="#141414"/>
<circle cx="255.3" cy="581.3" r="2.8" fill="#141414"/>
<path d="M249.90,584.50 L260.70,584.50" fill="none" stroke="#141414" stroke-width="1.1" stroke-linecap="butt"/>
<path d="M252.00,586.50 L258.60,586.50" fill="none" stroke="#141414" stroke-width="1.1" stroke-linecap="butt"/>
<path d="M253.80,588.50 L256.80,588.50" fill="none" stroke="#141414" stroke-width="1.1" stroke-linecap="butt"/>
<text x="265" y="590" fill="#3a3a3a" font-size="8.2">G105</text>
<text x="265" y="600" fill="#3a3a3a" font-size="8.2">(REAR OF RIGHT</text>
<text x="265" y="610" fill="#3a3a3a" font-size="8.2">FENDER APRON)</text>
<circle cx="495.5" cy="533.3" r="2.8" fill="#141414"/>
<text x="483" y="546" fill="#3a3a3a" font-size="8.2">S143</text>
<text x="483" y="556" fill="#3a3a3a" font-size="8.2">(ENGINE SENSOR HARN,</text>
<text x="483" y="566" fill="#3a3a3a" font-size="8.2">NEAR BREAKOUT TO</text>
<text x="483" y="576" fill="#3a3a3a" font-size="8.2">WINDSHIELD WIPER</text>
<text x="483" y="586" fill="#3a3a3a" font-size="8.2">MOTOR)</text>
<rect x="782.8" y="519.8" width="141.2" height="68" fill="#e8f4fc" stroke="#5e5e5e" stroke-width="1.4" stroke-dasharray="8.5,4" stroke-dashoffset="5"/>
<path d="M780.3,529.0 Q775,533.5 780.3,538.0" fill="none" stroke="#333" stroke-width="1.1"/>
<path d="M780.3,542.5 Q775,547 780.3,551.5" fill="none" stroke="#333" stroke-width="1.1"/>
<path d="M780.3,556.3 Q775,560.8 780.3,565.3" fill="none" stroke="#333" stroke-width="1.1"/>
<path d="M780.3,570.2 Q775,574.7 780.3,579.2" fill="none" stroke="#333" stroke-width="1.1"/>
<path d="M780.3,618.0 Q775,622.5 780.3,627.0" fill="none" stroke="#333" stroke-width="1.1"/>
<path d="M780.3,659.0 Q775,663.5 780.3,668.0" fill="none" stroke="#333" stroke-width="1.1"/>
<path d="M780.3,741.5 Q775,746 780.3,750.5" fill="none" stroke="#333" stroke-width="1.1"/>
<path d="M780.3,782.5 Q775,787 780.3,791.5" fill="none" stroke="#333" stroke-width="1.1"/>
<text x="790" y="537" fill="#3a3a3a" font-size="8.2">VEHICLE SPEED OUTPUT</text>
<text x="790" y="551" fill="#3a3a3a" font-size="8.2">OSS SENSOR OUTPUT</text>
<text x="790" y="565" fill="#3a3a3a" font-size="8.2">SIGNAL RETURN</text>
<text x="790" y="579" fill="#3a3a3a" font-size="8.2">TRANSFER CASE SP SEN</text>
<text x="928" y="527" fill="#3a3a3a" font-size="8.2">POWERTRAIN</text>
<text x="928" y="537" fill="#3a3a3a" font-size="8.2">CONTROL</text>
<text x="928" y="547" fill="#3a3a3a" font-size="8.2">MODULE</text>
<text x="928" y="557" fill="#3a3a3a" font-size="8.2">(ON RIGHT</text>
<text x="928" y="567" fill="#3a3a3a" font-size="8.2">SIDE OF</text>
<text x="928" y="577" fill="#3a3a3a" font-size="8.2">ENGINE</text>
<text x="928" y="587" fill="#3a3a3a" font-size="8.2">COMPT)</text>
<text x="667.5" y="529.8" text-anchor="end" fill="#3a3a3a" font-size="8.2">679</text>
<text x="743.2" y="529.8" text-anchor="end" fill="#3a3a3a" font-size="8.2">GRY/BLK</text>
<text x="774.8" y="529.8" text-anchor="end" fill="#3a3a3a" font-size="8.2">68</text>
<text x="667.5" y="543.8" text-anchor="end" fill="#3a3a3a" font-size="8.2">1486</text>
<text x="743.2" y="543.8" text-anchor="end" fill="#3a3a3a" font-size="8.2">DK BLU/YEL</text>
<text x="774.8" y="543.8" text-anchor="end" fill="#3a3a3a" font-size="8.2">84</text>
<text x="667.5" y="557.8" text-anchor="end" fill="#3a3a3a" font-size="8.2">395</text>
<text x="743.2" y="557.8" text-anchor="end" fill="#3a3a3a" font-size="8.2">GRY/RED</text>
<text x="774.8" y="557.8" text-anchor="end" fill="#3a3a3a" font-size="8.2">91</text>
<text x="667.5" y="571" text-anchor="end" fill="#3a3a3a" font-size="8.2">136</text>
<text x="743.2" y="571" text-anchor="end" fill="#3a3a3a" font-size="8.2">PNK</text>
<text x="774.8" y="571" text-anchor="end" fill="#3a3a3a" font-size="8.2">7</text>
<text x="757" y="619" text-anchor="end" fill="#3a3a3a" font-size="8.2">PNK</text>
<text x="757" y="661" text-anchor="end" fill="#3a3a3a" font-size="8.2">PNK/BLK</text>
<text x="757" y="743" text-anchor="end" fill="#3a3a3a" font-size="8.2">BRN/LT GRN</text>
<text x="757" y="784" text-anchor="end" fill="#3a3a3a" font-size="8.2">DK BLU/YEL</text>
<circle cx="633" cy="663.4" r="2.8" fill="#141414"/>
<text x="637" y="675" fill="#3a3a3a" font-size="8.2">S138</text>
<text x="637" y="685" fill="#3a3a3a" font-size="8.2">(ENGINE SENSOR</text>
<text x="637" y="695" fill="#3a3a3a" font-size="8.2">HARN, RIGHT REAR</text>
<text x="637" y="705" fill="#3a3a3a" font-size="8.2">CORNER OF ENGINE</text>
<text x="637" y="715" fill="#3a3a3a" font-size="8.2">COMPARTMENT)</text>
<rect x="781.5" y="614.5" width="43" height="56.5" fill="#e8f4fc" stroke="#5a5a5a" stroke-width="1.2"/>
<path d="M781.5,622.5 L804.6,622.5 L804.6,630.7 a2.91,2.91 0 0 1 0,5.82 a2.91,2.91 0 0 1 0,5.82 a2.91,2.91 0 0 1 0,5.82 a2.91,2.91 0 0 1 0,5.82 L804.6,663.5 L781.5,663.5" fill="none" stroke="#404040" stroke-width="1.1"/>
<path d="M785,619.0 L781.5,622.5 L785,626.0" fill="none" stroke="#333" stroke-width="1"/>
<path d="M785,660.0 L781.5,663.5 L785,667.0" fill="none" stroke="#333" stroke-width="1"/>
<path d="M809.80,631.20 L809.80,654.00" fill="none" stroke="#606060" stroke-width="1.1" stroke-linecap="butt"/>
<path d="M813.30,631.20 L813.30,654.00" fill="none" stroke="#606060" stroke-width="1.1" stroke-linecap="butt"/>
<text x="828" y="621" fill="#3a3a3a" font-size="8.2">TRANSFER</text>
<text x="828" y="631" fill="#3a3a3a" font-size="8.2">CASE SPEED</text>
<text x="828" y="641" fill="#3a3a3a" font-size="8.2">SENSOR</text>
<text x="828" y="651" fill="#3a3a3a" font-size="8.2">(AT LEFT</text>
<text x="828" y="661" fill="#3a3a3a" font-size="8.2">REAR OF</text>
<text x="828" y="671" fill="#3a3a3a" font-size="8.2">TRANSMISSION)</text>
<rect x="781.5" y="738.0" width="43" height="56.5" fill="#e8f4fc" stroke="#5a5a5a" stroke-width="1.2"/>
<path d="M781.5,746.0 L804.6,746.0 L804.6,754.2 a2.91,2.91 0 0 1 0,5.82 a2.91,2.91 0 0 1 0,5.82 a2.91,2.91 0 0 1 0,5.82 a2.91,2.91 0 0 1 0,5.82 L804.6,787.0 L781.5,787.0" fill="none" stroke="#404040" stroke-width="1.1"/>
<path d="M785,742.5 L781.5,746.0 L785,749.5" fill="none" stroke="#333" stroke-width="1"/>
<path d="M785,783.5 L781.5,787.0 L785,790.5" fill="none" stroke="#333" stroke-width="1"/>
<path d="M809.80,754.70 L809.80,777.50" fill="none" stroke="#606060" stroke-width="1.1" stroke-linecap="butt"/>
<path d="M813.30,754.70 L813.30,777.50" fill="none" stroke="#606060" stroke-width="1.1" stroke-linecap="butt"/>
<text x="828" y="744.5" fill="#3a3a3a" font-size="8.2">OUTPUT SHAFT</text>
<text x="828" y="754.5" fill="#3a3a3a" font-size="8.2">SPEED (OSS)</text>
<text x="828" y="764.5" fill="#3a3a3a" font-size="8.2">SENSOR</text>
<text x="828" y="774.5" fill="#3a3a3a" font-size="8.2">(ON LEFT</text>
<text x="828" y="784.5" fill="#3a3a3a" font-size="8.2">SIDE OF</text>
<text x="828" y="794.5" fill="#3a3a3a" font-size="8.2">TRANSMISSION)</text>
<text x="15" y="849.8" fill="#3a3a3a" font-size="8">114530</text>
</svg></div>
<div id="frame"></div>
<div id="topbar"></div>
<div id="close"><svg width="60" height="60" viewBox="0 0 60 60"><path d="M18.3,18.5 L41.9,42 M41.9,18.5 L18.3,42" stroke="#8e8e8e" stroke-width="4.4" stroke-linecap="round"/></svg></div>
<div id="bar"></div>
<div class="gap" style="left:253px"></div><div class="gap" style="left:421px"></div><div class="gap" style="left:588px"></div><div class="gap" style="left:840px"></div>
<div id="rs"></div>
</body></html>
